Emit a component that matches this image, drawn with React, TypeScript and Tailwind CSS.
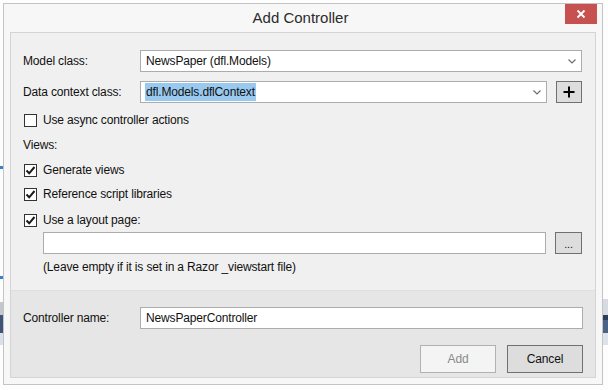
import React from "react";

const font = { fontFamily: '"Liberation Sans", Arial, sans-serif' };

const Chevron = () => (
  <svg width="8" height="5" viewBox="0 0 8 5" className="shrink-0">
    <path d="M0.5 0.5 L4 4 L7.5 0.5" fill="none" stroke="#6d6d6d" strokeWidth="1.2" />
  </svg>
);

const Check = ({ checked }: { checked: boolean }) => (
  <div className="w-[13px] h-[13px] border border-[#333333] bg-white flex items-center justify-center shrink-0">
    {checked && (
      <svg width="11" height="11" viewBox="0 0 11 11">
        <path d="M1.5 5.5 L4.2 8.3 L9.5 2" fill="none" stroke="#1a1a1a" strokeWidth="2" />
      </svg>
    )}
  </div>
);

const CheckRow = ({ label, checked, className }: { label: string; checked: boolean; className: string }) => (
  <div className={"flex items-center h-[18px] pl-[13px] " + className}>
    <Check checked={checked} />
    <span className="ml-[6px]">{label}</span>
  </div>
);

export default function App() {
  return (
    <div className="w-[608px] h-[390px] bg-[#fdfdfd] flex overflow-hidden" style={font}>
      {/* background window peeking on the left */}
      <div className="w-[3px] flex flex-col shrink-0">
        <div className="h-[166px]" />
        <div className="h-[3px] bg-[#3a7fd0]" />
        <div className="h-[107px]" />
        <div className="h-[3px] bg-[#3a7fd0]" />
        <div className="h-[23px]" />
        <div className="h-[13px] bg-[#c4c8ce]" />
        <div className="h-[18px] bg-[#3f5478]" />
        <div className="h-[12px] bg-[#dbe1e9]" />
      </div>

      {/* dialog window */}
      <div className="mt-[3px] w-[600px] h-[382px] border border-[#c4c4c4] bg-[#f7f7f7] flex flex-col shrink-0">
        {/* title bar */}
        <div className="h-[28px] flex items-start shrink-0">
          <div className="flex-1 h-full flex items-center justify-center pl-[32px]">
            <span className="text-[15px] text-[#2b2b2b]">Add Controller</span>
          </div>
          <div className="w-[32px] h-[20px] bg-[#c75050] flex items-center justify-center mr-[5px]">
            <svg width="10" height="10" viewBox="0 0 10 10">
              <path d="M1.5 1.5 L8.5 8.5 M8.5 1.5 L1.5 8.5" stroke="#ffffff" strokeWidth="1.8" />
            </svg>
          </div>
        </div>

        {/* client area */}
        <div className="mx-[6px] mb-[6px] flex-1 border border-[#d4d4d4] flex flex-col text-[12px] tracking-[-0.15px] text-[#111]">
          <div className="h-[257px] bg-[#f0f0f0] flex flex-col pr-[13px] shrink-0">
            {/* model class */}
            <div className="flex items-center mt-[17px] h-[22px]">
              <span className="w-[129px] pl-[12px]">Model class:</span>
              <div className="flex-1 h-full border border-[#acacac] bg-white flex items-center pl-[5px] pr-[5px]">
                <span className="flex-1">NewsPaper (dfl.Models)</span>
                <Chevron />
              </div>
            </div>

            {/* data context */}
            <div className="flex items-center mt-[9px] h-[22px]">
              <span className="w-[129px] pl-[12px]">Data context class:</span>
              <div className="w-[407px] h-full border border-[#acacac] bg-white flex items-center pl-[4px] pr-[5px]">
                <span className="flex-1">
                  <span className="bg-[#99c9ef] px-[1px] py-[2px]">dfl.Models.dflContext</span>
                </span>
                <Chevron />
              </div>
              <div className="ml-[9px] flex-1 h-full border border-[#707070] bg-[#dddddd] flex items-center justify-center">
                <svg width="12" height="12" viewBox="0 0 12 12">
                  <path d="M6 0.5 V11.5 M0.5 6 H11.5" stroke="#000" strokeWidth="2" />
                </svg>
              </div>
            </div>

            <CheckRow label="Use async controller actions" checked={false} className="mt-[8px]" />

            <div className="flex items-center h-[18px] mt-[7px] pl-[12px]">Views:</div>

            <CheckRow label="Generate views" checked className="mt-[7px]" />
            <CheckRow label="Reference script libraries" checked className="mt-[6px]" />
            <CheckRow label="Use a layout page:" checked className="mt-[8px]" />

            <div className="flex items-center mt-[3px] h-[22px] pl-[32px]">
              <div className="flex-1 h-full border border-[#acacac] bg-white" />
              <div className="ml-[9px] w-[27px] h-full border border-[#707070] bg-[#dddddd] flex items-end justify-center pb-[3px] text-[11px] leading-none">
                ...
              </div>
            </div>

            <div className="flex items-center h-[18px] mt-[4px] pl-[32px]">
              (Leave empty if it is set in a Razor _viewstart file)
            </div>
          </div>

          {/* footer */}
          <div className="flex-1 bg-[#e6e6e6] border-t border-[#dedede] flex flex-col pr-[12px]">
            <div className="flex items-center mt-[16px] h-[22px]">
              <span className="w-[129px] pl-[12px]">Controller name:</span>
              <div className="flex-1 h-full border border-[#acacac] bg-white flex items-center pl-[5px]">
                NewsPaperController
              </div>
            </div>
            <div className="flex justify-end gap-[11px] mt-[16px]">
              <div className="w-[76px] h-[28px] border border-[#adb2b5] bg-[#f4f4f4] text-[#8a8a8a] flex items-center justify-center">
                Add
              </div>
              <div className="w-[76px] h-[28px] border border-[#707070] bg-[#dddddd] flex items-center justify-center">
                Cancel
              </div>
            </div>
          </div>
        </div>
      </div>

      {/* background window peeking on the right */}
      <div className="flex-1 flex flex-col">
        <div className="h-[299px]" />
        <div className="h-[16px] bg-[#d6dbe2]" />
        <div className="h-[5px] bg-[#2c3e5c]" />
        <div className="h-[13px] bg-[#4b6387]" />
        <div className="h-[12px] bg-[#dde3ea]" />
      </div>
    </div>
  );
}
